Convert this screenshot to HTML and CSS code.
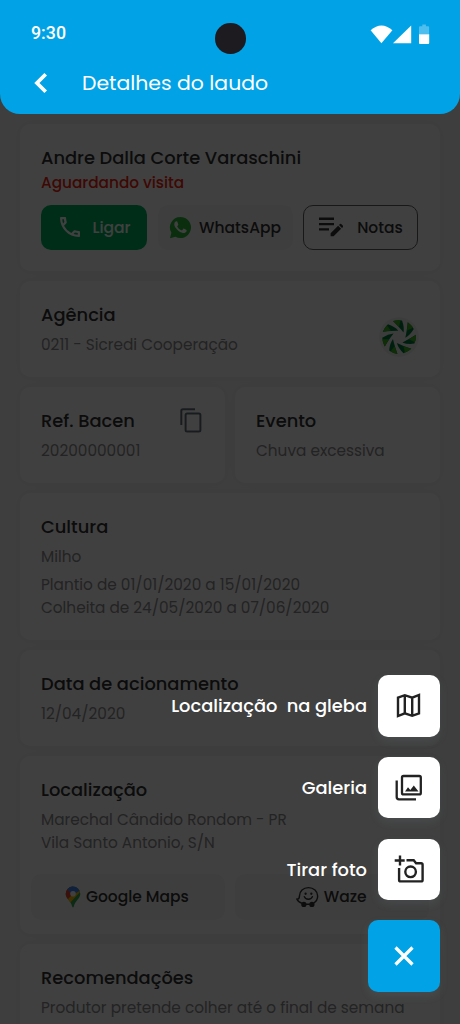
FILE: index.html
```html
<!DOCTYPE html>
<html lang="pt-BR">
<head>
<meta charset="utf-8">
<title>Detalhes do laudo</title>
<link rel="stylesheet" href="styles.css">
</head>
<body>
<div class="screen">
  <header class="header">
    <div class="status">
      <span class="clock">9:30</span>
      <svg class="status-icons" width="60" height="22" viewBox="0 0 60 22">
        <path d="M.6 6.200Q11.400-3.200 22.400 6.200L11.400 19.200Z" fill="#fff"/>
        <path d="M41.200 1.500V19.200H23Z" fill="#fff"/>
        <path d="M49 3.300q0-1 1-1h2.300V.600h3.600V2.300h2.200q1 0 1 1V10.300H49Z" fill="#fff" opacity=".3"/>
        <path d="M49 10.300h10.200v8.700q0 1-1 1H50q-1 0-1-1Z" fill="#fff"/>
      </svg>
    </div>
    <span class="camera"></span>
    <div class="appbar">
      <svg width="16" height="22" viewBox="0 0 16 22"><path d="M12.700 2.200L3.900 11l8.800 8.800" fill="none" stroke="#fff" stroke-width="3.700"/></svg>
      <h1 class="page-title">Detalhes do laudo</h1>
    </div>
  </header>

  <main class="content">
    <section class="card card-client">
      <h2 class="title name">Andre Dalla Corte Varaschini</h2>
      <p class="status-text">Aguardando visita</p>
      <div class="actions">
        <button class="btn call">
          <svg width="20" height="20" viewBox="3 3 18 18" fill="#fff"><path d="M6.540 5c.06.890.210 1.760.450 2.590l-1.200 1.200c-.410-1.200-.670-2.470-.760-3.790h1.510m9.860 12.020c.850.240 1.720.390 2.600.450v1.490c-1.320-.090-2.590-.350-3.800-.750l1.200-1.190M7.500 3H4c-.550 0-1 .450-1 1 0 9.390 7.610 17 17 17 .550 0 1-.450 1-1v-3.490c0-.550-.450-1-1-1-1.240 0-2.450-.200-3.570-.570a.840.840 0 0 0-.310-.050c-.260 0-.510.100-.710.290l-2.200 2.200a15.150 15.150 0 0 1-6.590-6.590l2.200-2.200c.280-.280.360-.670.250-1.020A11.360 11.360 0 0 1 8.500 4c0-.550-.450-1-1-1z"/></svg>
          <span>Ligar</span>
        </button>
        <button class="btn whats">
          <svg width="23" height="23" viewBox="0 0 24 24"><path d="M12 1a11 11 0 1 1-5.200 20.700L1 23.200l1.500-5.600A11 11 0 0 1 12 1z" fill="#2eb93f"/><path d="M8.800 6.200c-.3-.600-.600-.600-1-.6-1 0-2.300 1.200-2.300 2.900 0 1.700 1.200 3.400 1.500 3.800 1.500 2.200 3.600 4.300 6.800 5.300 1.900.6 3.900-.2 4.400-1.400.3-.8.300-1.500.1-1.700-.6-.5-2-1.100-2.600-1.300-.4-.1-.7 0-.9.300l-1 1.300c-.2.200-.5.300-.9.100-1.800-.8-3.100-1.800-4.200-3.700-.2-.3-.1-.6.100-.8.600-.6 1-1.200.9-1.500z" fill="#fff"/></svg>
          <span>WhatsApp</span>
        </button>
        <button class="btn notes">
          <svg width="25" height="20" viewBox="0 0 25 20" fill="#333"><path d="M1 .6h15v2.500H1zM1 5.900h15v2.400H1zM1 11.200h10v2.400H1zM12.600 16.300l7.500-7.500 3 3-7.500 7.500h-3zM21 7.900l1-1q.6-.5 1.200 0l1.800 1.800q.5.600 0 1.200l-1 1z"/></svg>
          <span>Notas</span>
        </button>
      </div>
    </section>

    <section class="card split">
      <div>
        <h2 class="title">Agência</h2>
        <p class="text">0211 - Sicredi Cooperação</p>
      </div>
      <svg class="logo" width="42" height="42" viewBox="-21 -21 42 42">
        <defs>
          <g id="blade"><path d="M-6-16Q-1-17.200 3-16.500Q5.500-10 4.500-4.500Q1-9-6-16Z" fill="#007a3c"/><path d="M-6-16Q-2-17.100 1.500-16.700L0-10.300Z" fill="#3cb41e"/></g>
        </defs>
        <circle r="19.800" fill="#eee"/>
        <use href="#blade"/><use href="#blade" transform="rotate(51.400)"/><use href="#blade" transform="rotate(102.900)"/><use href="#blade" transform="rotate(154.300)"/><use href="#blade" transform="rotate(205.700)"/><use href="#blade" transform="rotate(257.100)"/><use href="#blade" transform="rotate(308.600)"/>
      </svg>
    </section>

    <div class="pair">
      <section class="card split">
        <div>
          <h2 class="title">Ref. Bacen</h2>
          <p class="text">20200000001</p>
        </div>
        <svg class="copy" width="22" height="25" viewBox="0 0 22 25" fill="none" stroke="#66707c" stroke-width="2"><path d="M1.300 17V3Q1.300 1.300 3 1.300H15"/><rect x="5.600" y="5.600" width="14.800" height="17.800" rx="1.500"/></svg>
      </section>
      <section class="card">
        <h2 class="title">Evento</h2>
        <p class="text">Chuva excessiva</p>
      </section>
    </div>

    <section class="card">
      <h2 class="title">Cultura</h2>
      <p class="text crop">Milho</p>
      <p class="text">Plantio de 01/01/2020 a 15/01/2020</p>
      <p class="text">Colheita de 24/05/2020 a 07/06/2020</p>
    </section>

    <section class="card">
      <h2 class="title">Data de acionamento</h2>
      <p class="text">12/04/2020</p>
    </section>

    <section class="card card-place">
      <h2 class="title">Localização</h2>
      <p class="text">Marechal Cândido Rondom - PR</p>
      <p class="text">Vila Santo Antonio, S/N</p>
      <div class="maps">
        <button class="btn map">
          <svg width="16" height="22" viewBox="0 0 16 22">
            <defs><clipPath id="pin"><path d="M8 .5a7.300 7.300 0 0 1 7.300 7.300c0 5.200-5.300 6.700-6.500 12.700q-.8 2-1.600 0C6 14.500.7 13 .7 7.800A7.300 7.300 0 0 1 8 .5z"/></clipPath></defs>
            <g clip-path="url(#pin)"><path d="M0 0h16v22H0z" fill="#34a853"/><path d="M0 16V10L9 1l7 4L4 18z" fill="#fbbc04"/><path d="M0 0h8v8l-5 5-3-2z" fill="#ea4335"/><path d="M2 3L5 0h11v4L8 9z" fill="#4285f4"/></g>
            <circle cx="8" cy="7.800" r="2.800" fill="#fff"/>
          </svg>
          <span>Google Maps</span>
        </button>
        <button class="btn map">
          <svg width="23" height="22" viewBox="0 0 24 22" fill="none" stroke="#333" stroke-width="1.500"><path d="M6.500 17.600C3.500 16.800 1.700 15 1 13.400c2 0 2.600-.9 2.600-3.400C3.600 4.700 7.600 1.200 13 1.200S22.600 5 22.600 10c0 3.300-1.500 5.800-4.300 7.300M10.200 18.600h4.300"/><path d="M8.700 10.600c1.200 3.600 7.200 3.600 8.400 0" stroke-linecap="round"/><circle cx="8.200" cy="18.800" r="2" fill="#333"/><circle cx="16.600" cy="18.800" r="2" fill="#333"/><g fill="#333" stroke="none"><circle cx="10" cy="7.600" r="1.200"/><circle cx="16" cy="7.600" r="1.200"/></g></svg>
          <span>Waze</span>
        </button>
      </div>
    </section>

    <section class="card">
      <h2 class="title">Recomendações</h2>
      <p class="text">Produtor pretende colher até o final de semana</p>
    </section>
  </main>

  <div class="overlay"></div>

  <nav class="dial">
    <div class="dial-row"><span class="dial-label">Localização&nbsp; na gleba</span>
      <button class="fab"><svg width="25" height="25" viewBox="0 0 25 25" fill="none" stroke="#222" stroke-width="2.400"><path d="M2 4.700L8.800 2.200l7.400 2.500L23 2v18.300l-6.800 2.500-7.400-2.500L2 23zM8.800 2.200v18.100M16.200 4.700v18.100"/></svg></button></div>
    <div class="dial-row"><span class="dial-label">Galeria</span>
      <button class="fab"><svg width="27" height="27" viewBox="0 0 27 27" fill="none" stroke="#222" stroke-width="2.300"><rect x="7" y="2" width="18.800" height="18.400" rx="1.500"/><path d="M1.700 6.500V23q0 2.300 2.300 2.300H21"/><path d="M10 17.500l3-4.200 2.300 2.800 3.500-4.600 4.700 6z" fill="#222" stroke="none"/></svg></button></div>
    <div class="dial-row"><span class="dial-label">Tirar foto</span>
      <button class="fab"><svg width="30" height="28" viewBox="0 0 30 28" fill="none" stroke="#222" stroke-width="2.400"><path d="M6 .5v10M.7 5.500h10M12.500 5.300h7.200l2.400 2.900h5q1.500 0 1.500 1.500v15.200q0 1.500-1.500 1.500H6.600q-1.500 0-1.500-1.500V13"/><circle cx="16.600" cy="16.800" r="5.300"/></svg></button></div>
    <button class="fab close"><svg width="20" height="20" viewBox="0 0 20 20"><path d="M1.500 1.500l17 17M18.500 1.500l-17 17" stroke="#fff" stroke-width="3.200"/></svg></button>
  </nav>
</div>
</body>
</html>
```
FILE: styles.css
```css
* { box-sizing: border-box; margin: 0; padding: 0; }

body {
  background: #f6f6f6;
  font-family: Poppins, Inter, "Open Sans", sans-serif;
}

.screen { position: relative; width: 460px; height: 1024px; overflow: hidden; }

.header {
  position: relative;
  z-index: 3;
  height: 113.500px;
  background: #01a3e6;
  border-radius: 0 0 20px 20px;
  color: #fff;
}
.status {
  display: flex;
  justify-content: space-between;
  padding: 23.500px 30px 0 31px;
  height: 60.500px;
}
.clock { font: 500 17.800px/18px Roboto, sans-serif; }
.camera {
  position: absolute;
  left: 215px;
  top: 23px;
  width: 30.500px;
  height: 30.500px;
  border-radius: 50%;
  background: #1d1b20;
}
.appbar { display: flex; align-items: center; gap: 33px; padding-left: 33px; height: 44px; }
.page-title { font-size: 20.400px; font-weight: 400; }

.content { display: flex; flex-direction: column; gap: 10.300px; padding: 10px 20px 0; }
.card {
  flex: none;
  padding: 21px 21px 20.700px;
  background: #fff;
  border-radius: 10px;
  box-shadow: 0 0 8px rgba(0, 0, 0, .04);
}
.card-client { height: 147.600px; }
.title { font-size: 17.850px; line-height: 26px; font-weight: 500; color: #333; }
.text { font-size: 15.300px; line-height: 23px; color: #8c8c8c; }
.title + .text { margin-top: 5px; }
.title.name { line-height: 25px; }
.status-text { font-size: 15.300px; line-height: 24px; font-weight: 500; color: #f8220f; margin-top: 1px; }

.actions { display: flex; gap: 10.500px; margin-top: 10.300px; }
.btn {
  display: flex;
  align-items: center;
  justify-content: center;
  height: 45.600px;
  border: 0;
  border-radius: 10px;
  background: #f7f7f7;
  color: #333;
  font: 500 15.500px/23px Poppins, Inter, sans-serif;
}
.call { width: 106px; gap: 13px; padding-left: 2px; background: #00b55f; color: #fff; }
.whats { width: 135px; gap: 7px; }
.notes { width: 115px; gap: 14px; background: transparent; border: 1.500px solid #606060; }
.actions .btn { padding-bottom: 1px; }

.split { display: flex; justify-content: space-between; }
.logo { margin: 13.500px -1px -13.500px 0; }
.copy { margin: 0 2px 0 0; }
.pair { display: grid; grid-template-columns: 204.500px 205px; gap: 10.500px; }
.crop { margin-bottom: 5px; }

.card-place { padding-bottom: 14px; }
.maps { display: flex; gap: 10.500px; margin: 19.800px -10px 0; }
.map { flex: 1; gap: 5px; padding-right: 2px; }

.overlay { position: absolute; inset: 0; z-index: 2; background: rgba(0, 0, 0, .75); }

.dial {
  position: absolute;
  z-index: 4;
  right: 20.500px;
  top: 675px;
  display: flex;
  flex-direction: column;
  align-items: flex-end;
  gap: 20.300px;
}
.dial-row { display: flex; align-items: center; gap: 11px; }
.dial-label { font-size: 17.850px; font-weight: 500; color: #fff; }
.fab {
  display: flex;
  align-items: center;
  justify-content: center;
  width: 61.500px;
  height: 61.500px;
  border: 0;
  border-radius: 10px;
  background: #fff;
  box-shadow: 0 4px 8px rgba(120, 140, 150, .15);
}
.fab.close { width: 71.500px; height: 71.500px; background: #01a3e6; }
```
